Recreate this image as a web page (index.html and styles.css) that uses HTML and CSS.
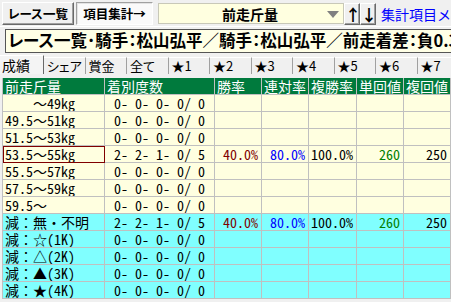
FILE: index.html
```html
<!DOCTYPE html>
<html lang="ja">
<head>
  <meta charset="UTF-8">
  <title>項目集計</title>
  <link rel="stylesheet" href="styles.css">
</head>
<body>

<div class="app">
  <div class="toolbar">
    <button class="btn btn-list">レース一覧</button>
    <button class="btn btn-agg">項目集計→</button>
    <div class="combo">
      <span class="combo-text">前走斤量</span>
      <span class="combo-arrow"></span>
    </div>
    <button class="arrow-btn">↑</button>
    <button class="arrow-btn">↓</button>
    <a class="menu-link" href="#">集計項目メニュー</a>
  </div>

  <div class="title-box">レース一覧･騎手：松山弘平／騎手：松山弘平／前走着差：負0.3～0.5</div>

  <div class="tabs">
    <div class="tab active">成績</div>
    <div class="tab">シェア</div>
    <div class="tab">賞金</div>
    <div class="tab">全て</div>
    <div class="tab">★1</div>
    <div class="tab">★2</div>
    <div class="tab">★3</div>
    <div class="tab">★4</div>
    <div class="tab">★5</div>
    <div class="tab">★6</div>
    <div class="tab">★7</div>
  </div>

  <table class="grid">
    <colgroup>
      <col class="c-name">
      <col class="c-count">
      <col class="c-num">
      <col class="c-num">
      <col class="c-num2">
      <col class="c-num">
      <col class="c-num">
    </colgroup>
    <thead>
      <tr>
        <th>前走斤量</th>
        <th>着別度数</th>
        <th>勝率</th>
        <th>連対率</th>
        <th>複勝率</th>
        <th>単回値</th>
        <th>複回値</th>
      </tr>
    </thead>
    <tbody>
      <tr>
        <td class="name">    ～49kg</td><td class="count"> 0- 0- 0- 0/ 0</td>
        <td></td><td></td><td></td><td></td><td></td>
      </tr>
      <tr>
        <td class="name">49.5～51kg</td><td class="count"> 0- 0- 0- 0/ 0</td>
        <td></td><td></td><td></td><td></td><td></td>
      </tr>
      <tr>
        <td class="name">51.5～53kg</td><td class="count"> 0- 0- 0- 0/ 0</td>
        <td></td><td></td><td></td><td></td><td></td>
      </tr>
      <tr>
        <td class="name selected">53.5～55kg</td><td class="count"> 2- 2- 1- 0/ 5</td>
        <td class="num win">40.0%</td><td class="num place">80.0%</td><td class="num">100.0%</td>
        <td class="num ret">260</td><td class="num">250</td>
      </tr>
      <tr>
        <td class="name">55.5～57kg</td><td class="count"> 0- 0- 0- 0/ 0</td>
        <td></td><td></td><td></td><td></td><td></td>
      </tr>
      <tr>
        <td class="name">57.5～59kg</td><td class="count"> 0- 0- 0- 0/ 0</td>
        <td></td><td></td><td></td><td></td><td></td>
      </tr>
      <tr>
        <td class="name">59.5～</td><td class="count"> 0- 0- 0- 0/ 0</td>
        <td></td><td></td><td></td><td></td><td></td>
      </tr>
      <tr class="cyan">
        <td class="name">減：無・不明</td><td class="count"> 2- 2- 1- 0/ 5</td>
        <td class="num win">40.0%</td><td class="num place">80.0%</td><td class="num">100.0%</td>
        <td class="num ret">260</td><td class="num">250</td>
      </tr>
      <tr class="cyan">
        <td class="name">減：☆(1K)</td><td class="count"> 0- 0- 0- 0/ 0</td>
        <td></td><td></td><td></td><td></td><td></td>
      </tr>
      <tr class="cyan">
        <td class="name">減：△(2K)</td><td class="count"> 0- 0- 0- 0/ 0</td>
        <td></td><td></td><td></td><td></td><td></td>
      </tr>
      <tr class="cyan">
        <td class="name">減：▲(3K)</td><td class="count"> 0- 0- 0- 0/ 0</td>
        <td></td><td></td><td></td><td></td><td></td>
      </tr>
      <tr class="cyan">
        <td class="name">減：★(4K)</td><td class="count"> 0- 0- 0- 0/ 0</td>
        <td></td><td></td><td></td><td></td><td></td>
      </tr>
    </tbody>
  </table>
</div>

</body>
</html>
```

FILE: styles.css
```css
body {
  margin: 0;
  background: #f0f0f0;
  font-family: "Noto Sans CJK JP", sans-serif;
  color: #000;
  overflow: hidden;
}

.app {
  width: 451px;
  height: 302px;
  overflow: hidden;
}

.toolbar {
  display: flex;
  align-items: flex-start;
  height: 27px;
  padding: 2px 0 0 2px;
  box-sizing: border-box;
  border-bottom: 1px solid #fff;
  white-space: nowrap;
}

.toolbar > * {
  flex: none;
}

.btn {
  height: 23px;
  padding: 0;
  font-family: "Noto Sans CJK JP", sans-serif;
  font-weight: bold;
  font-size: 12.5px;
  line-height: 19px;
  font-feature-settings: "palt";
  background: #f0f0f0;
  border: 1px solid;
  border-color: #fff #696969 #696969 #fff;
  box-shadow: inset -1px -1px 0 #a0a0a0;
  color: #000;
  overflow: hidden;
}

.btn-list {
  width: 72px;
}

.btn-agg {
  width: 77px;
  margin-left: 2px;
  background: #fafafa;
  border-color: #a0a0a0 #fff #fff #a0a0a0;
  box-shadow: inset 1px 1px 0 #e3e3e3;
}

.combo {
  width: 186px;
  height: 21px;
  margin: 1px 0 0 5px;
  box-sizing: border-box;
  background: #ffffe0;
  border: 1px solid #c8c8b8;
  position: relative;
  display: flex;
  justify-content: center;
  align-items: center;
}

.combo-text {
  font-weight: bold;
  font-size: 14px;
  line-height: 18px;
  margin-left: -2px;
}

.combo-arrow {
  position: absolute;
  right: 4px;
  top: 7px;
  width: 0;
  height: 0;
  border-left: 6px solid transparent;
  border-right: 6px solid transparent;
  border-top: 7px solid #808080;
}

.arrow-btn {
  width: 16px;
  height: 22px;
  margin-top: 1px;
  padding: 0;
  font-family: "Noto Sans CJK JP", sans-serif;
  font-weight: bold;
  font-size: 16px;
  line-height: 18px;
  background: #f0f0f0;
  border: 1px solid;
  border-color: #fff #696969 #696969 #fff;
  box-shadow: inset -1px -1px 0 #a0a0a0;
  color: #000;
}

.arrow-btn:first-of-type {
  margin-left: 4px;
}

.menu-link {
  margin: 4px 0 0 5px;
  font-size: 14px;
  line-height: 16px;
  color: #0000ff;
  text-decoration: none;
}

.title-box {
  margin: 2px 0 0 5px;
  width: 520px;
  height: 24px;
  box-sizing: border-box;
  background: #ffffe6;
  border: 1px solid #555;
  padding-left: 2px;
  font-weight: bold;
  font-size: 16.5px;
  line-height: 21px;
  font-feature-settings: "palt";
  white-space: nowrap;
  overflow: hidden;
}

.tabs {
  display: flex;
  align-items: flex-end;
  height: 19px;
  margin-top: 2px;
  white-space: nowrap;
}

.tab {
  width: 41.5px;
  height: 17px;
  box-sizing: border-box;
  font-size: 13px;
  line-height: 16px;
  padding-left: 3px;
  font-feature-settings: "palt";
  border-top: 1px solid #fff;
  border-right: 1px solid #a0a0a0;
  background: #f0f0f0;
  flex: none;
  overflow: hidden;
}

.tab.active {
  width: 44px;
  height: 19px;
  padding-left: 2px;
  font-size: 14px;
  background: #f4f4f4;
  border-right: 1px solid #696969;
  line-height: 18px;
}

.grid {
  margin: 4px 0 0 2px;
  border-collapse: collapse;
  table-layout: fixed;
  width: 449px;
  font-family: "Noto Sans Mono CJK JP", "Noto Sans CJK JP", "Liberation Mono", monospace;
  font-size: 14px;
}

.c-name { width: 102px; }
.c-count { width: 110px; }
.c-num { width: 47px; }
.c-num2 { width: 48px; }

.grid th {
  height: 16px;
  padding: 0 0 0 2px;
  background: #007a3d;
  color: #fff;
  font-family: "Noto Sans CJK JP", sans-serif;
  font-weight: normal;
  font-size: 14px;
  line-height: 16px;
  text-align: left;
  border: 1px solid #c0c0c0;
  border-top: none;
  white-space: nowrap;
  overflow: hidden;
}

.grid td {
  height: 16px;
  padding: 0;
  line-height: 16px;
  background: #ffffe0;
  border: 1px solid #c0c0c0;
  white-space: pre;
  overflow: hidden;
}

.grid tr.cyan td {
  background: #80ffff;
}

.grid td.name {
  padding-left: 2px;
}

.grid td.selected {
  outline: 1px solid #800000;
  outline-offset: -1px;
}

.grid td.count {
  padding-left: 2px;
}

.grid td.num {
  text-align: right;
  padding-right: 3px;
}

.win { color: #800000; }
.place { color: #0000ff; }
.ret { color: #008000; }
```
